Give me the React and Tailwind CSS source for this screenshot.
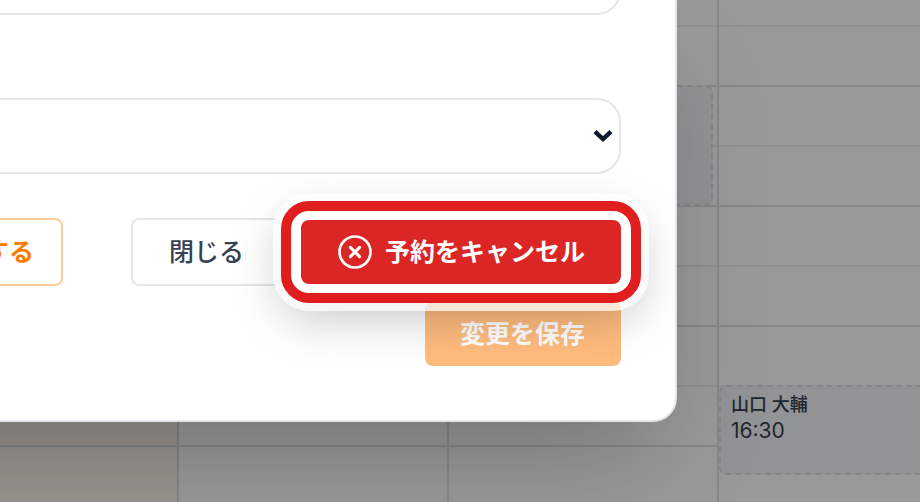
const slots = [
  "h-[27px] border-[#f0f1f2]",
  "h-[60px] border-[#dfe1e3]",
  "h-[60px] border-[#f0f1f2]",
  "h-[60px] border-[#dfe1e3]",
  "h-[60px] border-[#f0f1f2]",
  "h-[60px] border-[#dfe1e3]",
  "h-[60px] border-[#f0f1f2]",
  "h-[60px] border-[#dfe1e3]",
  "h-[60px] border-[#f0f1f2]",
];

function DayColumn({ className, children }) {
  return (
    <div className={`relative border-r-2 ${className}`}>
      {slots.map((slot, i) => (
        <div key={i} className={`border-b-2 ${slot}`} />
      ))}
      {children}
    </div>
  );
}

function Booking({ className, children }) {
  return (
    <div
      className={`absolute left-0 right-1 rounded-lg border-2 border-dashed border-[#dcdfe2] bg-[#f3f5f7] px-[10px] py-[5px] text-[#374151] ${className}`}
    >
      {children}
    </div>
  );
}

function Calendar() {
  return (
    <div className="flex h-full">
      <DayColumn className="w-[179px] shrink-0 border-[#d9dfe5] bg-orange-50" />
      <DayColumn className="w-[270px] shrink-0 border-[#dfe1e3]" />
      <DayColumn className="w-[270px] shrink-0 border-[#dfe1e3]">
        <Booking className="top-[85px] h-[121px]" />
      </DayColumn>
      <DayColumn className="min-w-[270px] grow border-[#dfe1e3]">
        <Booking className="top-[385px] h-[90px]">
          <p className="text-[18px] leading-[26px] font-medium">山口 大輔</p>
          <p className="text-[21px] leading-[26px]">16:30</p>
        </Booking>
      </DayColumn>
    </div>
  );
}

function CancelIcon() {
  return (
    <svg className="size-9" viewBox="0 0 36 36" fill="none" stroke="currentColor" aria-hidden="true">
      <circle cx="18" cy="18" r="15.5" strokeWidth="2.6" />
      <path d="M13.4 13.4l9.2 9.2M22.6 13.4l-9.2 9.2" strokeWidth="3" strokeLinecap="round" />
    </svg>
  );
}

function BookingModal() {
  return (
    <div
      role="dialog"
      className="-ml-40 rounded-br-3xl border-r-2 border-b-2 border-[#e5e5ea] bg-white pr-[54px] pb-[54px] shadow-[0_50px_100px_-24px_rgba(0,0,0,0.25)]"
    >
      <div className="flex h-[15px] flex-col justify-end overflow-hidden">
        <input
          type="text"
          aria-label="メモ"
          className="h-[76px] w-full shrink-0 rounded-3xl border-2 border-[#e5e5ea] outline-none"
        />
      </div>

      <div className="relative mt-[83px]">
        <select
          aria-label="ステータス"
          className="block h-[76px] w-full appearance-none rounded-3xl border-2 border-[#e5e5ea] bg-white outline-none"
        />
        <svg
          className="pointer-events-none absolute top-8 right-2 h-3 w-5"
          viewBox="0 0 20 12"
          fill="none"
          stroke="#0f172a"
          strokeWidth="4.4"
          aria-hidden="true"
        >
          <path d="M2 1.6l8 7.4 8-7.4" />
        </svg>
      </div>

      <div className="mt-11 flex items-center justify-end gap-5 text-[25px] leading-9">
        <button
          type="button"
          className="mr-12 h-[68px] rounded-lg border-2 border-[#ffca99] bg-white pr-[27px] pl-9 font-bold text-[#ff7b00]"
        >
          する
        </button>
        <button
          type="button"
          className="h-[68px] rounded-lg border-2 border-[#e5e5ea] bg-white px-9 font-medium text-gray-700"
        >
          閉じる
        </button>
        <div className="relative isolate z-10 -ml-px">
          {/* highlight ring around the cancel action */}
          <div className="absolute -inset-x-5 -inset-y-[19px] -z-10 rounded-[28px] border-10 border-[#e11d1d] bg-white shadow-[0_0_0_8px_rgba(255,255,255,0.75),0_16px_48px_rgba(0,0,0,0.22)]" />
          <button
            type="button"
            className="flex h-16 items-center gap-3 rounded-lg bg-[#dc2626] pr-9 pl-9 font-bold text-white"
          >
            <CancelIcon />
            予約をキャンセル
          </button>
        </div>
      </div>

      <div className="mt-4 flex justify-end">
        <button
          type="button"
          disabled
          className="h-16 rounded-lg bg-[#ff7b00] pr-9 pl-[35px] text-[25px] leading-9 font-bold text-white opacity-50"
        >
          変更を保存
        </button>
      </div>
    </div>
  );
}

export default function App() {
  return (
    <div className="relative h-screen overflow-hidden bg-white font-['Inter','Noto_Sans_CJK_JP',sans-serif]">
      <Calendar />
      <div className="absolute inset-0 bg-black/40 pr-[243px]">
        <BookingModal />
      </div>
    </div>
  );
}
